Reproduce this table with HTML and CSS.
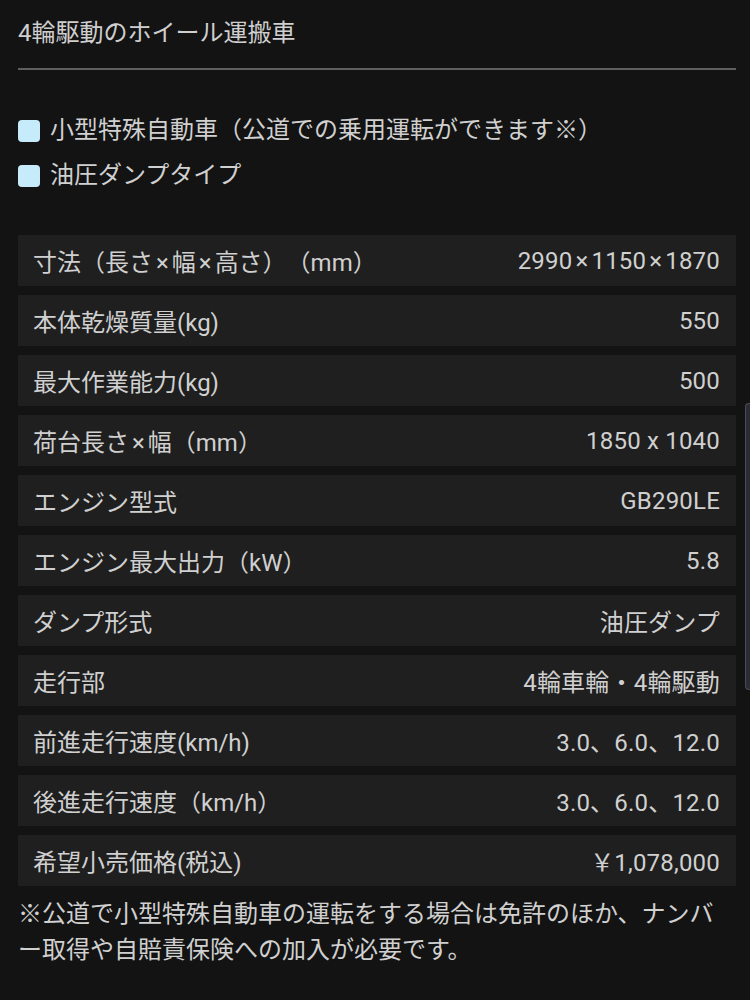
FILE: index.html
```html
<!DOCTYPE html>
<html lang="ja">
<head>
<meta charset="utf-8">
<title>4輪駆動のホイール運搬車</title>
<link rel="stylesheet" href="styles.css">
</head>
<body>
<div class="page">
  <h1 class="title">4輪駆動のホイール運搬車</h1>
  <ul class="features">
    <li class="feature"><span class="mark"></span>小型特殊自動車（公道での乗用運転ができます※）</li>
    <li class="feature"><span class="mark"></span>油圧ダンプタイプ</li>
  </ul>
  <div class="specs">
    <div class="row"><span class="label">寸法（長さ<span class="times">×</span>幅<span class="times">×</span>高さ）（mm）</span><span class="value">2990<span class="times">×</span>1150<span class="times">×</span>1870</span></div>
    <div class="row"><span class="label">本体乾燥質量(kg)</span><span class="value">550</span></div>
    <div class="row"><span class="label">最大作業能力(kg)</span><span class="value">500</span></div>
    <div class="row"><span class="label">荷台長さ<span class="times">×</span>幅（mm）</span><span class="value">1850 x 1040</span></div>
    <div class="row"><span class="label">エンジン型式</span><span class="value">GB290LE</span></div>
    <div class="row"><span class="label">エンジン最大出力（kW）</span><span class="value">5.8</span></div>
    <div class="row"><span class="label">ダンプ形式</span><span class="value">油圧ダンプ</span></div>
    <div class="row"><span class="label">走行部</span><span class="value">4輪車輪・4輪駆動</span></div>
    <div class="row"><span class="label">前進走行速度(km/h)</span><span class="value">3.0、6.0、12.0</span></div>
    <div class="row"><span class="label">後進走行速度（km/h）</span><span class="value">3.0、6.0、12.0</span></div>
    <div class="row"><span class="label">希望小売価格(税込)</span><span class="value">￥1,078,000</span></div>
  </div>
  <p class="note">※公道で小型特殊自動車の運転をする場合は免許のほか、ナンバー取得や自賠責保険への加入が必要です。</p>
</div>
<div class="scrollbar"></div>
</body>
</html>
```
FILE: styles.css
```css
html, body {
  margin: 0;
  padding: 0;
  background: #131313;
}
body {
  font-family: Roboto, "Noto Sans CJK JP", sans-serif;
  color: #d0d0d0;
  font-size: 24px;
  width: 750px;
  height: 1000px;
  overflow: hidden;
  position: relative;
  text-spacing-trim: space-all;
}
.page {
  padding: 0 14px 0 18px;
}
.title {
  margin: 0;
  padding: 15px 0 17px;
  font-size: 24px;
  font-weight: 400;
  line-height: 36px;
  color: #cfcfcf;
  border-bottom: 2px solid #5e5e5e;
}
.features {
  list-style: none;
  margin: 38px 0 0;
  padding: 0;
}
.feature {
  display: flex;
  align-items: center;
  gap: 10px;
  line-height: 45px;
  height: 45px;
  white-space: nowrap;
}
.mark {
  width: 22px;
  height: 22px;
  border-radius: 4px;
  background: #c6ebfb;
  flex: none;
}
.specs {
  margin-top: 37px;
  display: flex;
  flex-direction: column;
  gap: 9px;
}
.row {
  height: 51px;
  background: #1f1f1f;
  display: flex;
  align-items: center;
  justify-content: space-between;
  padding: 0 16px 0 15px;
  white-space: nowrap;
}
.times {
  margin: 0 3px;
}
.value {
  letter-spacing: 0.2px;
}
.note {
  margin: 10px 0 0;
  line-height: 36px;
  line-break: loose;
}
.scrollbar {
  position: absolute;
  left: 745px;
  top: 403px;
  width: 5px;
  height: 287px;
  background: #2c2c36;
  border: 1px solid #4a4a58;
  border-right: none;
  border-radius: 4px 0 0 4px;
  box-sizing: border-box;
}
```
